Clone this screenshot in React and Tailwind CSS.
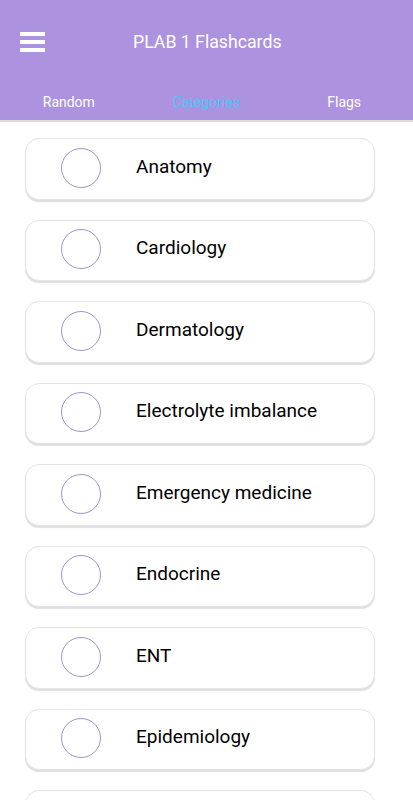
import React from "react";

const items = [
  "Anatomy",
  "Cardiology",
  "Dermatology",
  "Electrolyte imbalance",
  "Emergency medicine",
  "Endocrine",
  "ENT",
  "Epidemiology",
  "",
];

export default function App() {
  return (
    <div className="w-[413px] h-[800px] overflow-hidden bg-white" style={{ fontFamily: "Roboto, 'Noto Sans', sans-serif" }}>
      <div className="bg-[#ad92df] border-b-2 border-[#dcdcdc]">
        <div className="h-[84px] flex items-center relative">
          <div className="ml-[20px] flex flex-col gap-[4px]">
            <div className="w-[25px] h-[4px] bg-white" />
            <div className="w-[25px] h-[4px] bg-white" />
            <div className="w-[25px] h-[4px] bg-white" />
          </div>
          <div className="ml-[88px] text-white text-[17.7px]">PLAB 1 Flashcards</div>
        </div>
        <div className="h-[36px] grid grid-cols-3 items-center text-[14px]">
          <div className="text-center text-white">Random</div>
          <div className="text-center text-[#4fc3f7]">Categories</div>
          <div className="text-center text-white">Flags</div>
        </div>
      </div>
      <div className="pt-[16px] flex flex-col gap-[20px]">
        {items.map((t, i) => (
          <div
            key={i}
            className="ml-[25px] w-[350px] h-[61.5px] shrink-0 rounded-[14px] border border-[#e4e4e4] bg-white shadow-[0_2px_1px_rgba(0,0,0,0.13)] flex items-center"
          >
            <div className="ml-[35px] w-[40px] h-[40px] rounded-full border border-[#9f92cc] shrink-0 -mt-[2px]" />
            {t && <div className="ml-[35px] text-[19px] text-black -mt-[4px]">{t}</div>}
          </div>
        ))}
      </div>
    </div>
  );
}
